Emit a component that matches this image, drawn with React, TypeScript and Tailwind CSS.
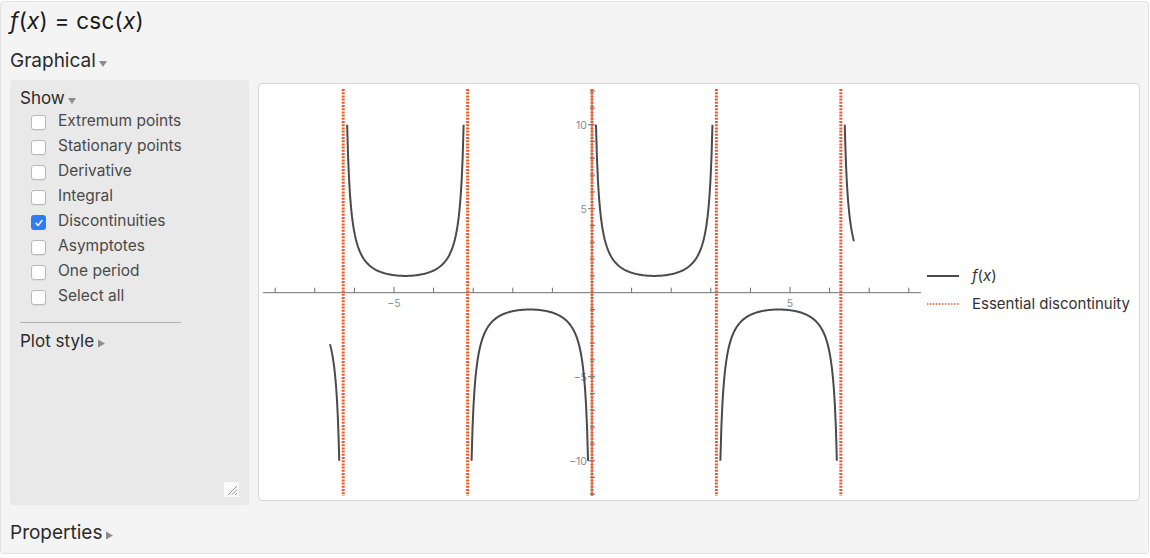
import React from "react";

const FONT = { fontFamily: "Inter, 'Liberation Sans', sans-serif" };

const X0 = 333;
const SX = 39.6;
const Y0 = 209.7;
const SY = 16.8;
const px = (x: number) => X0 + SX * x;
const py = (y: number) => Y0 - SY * y;

const LIMIT = 6.616;

function cscPaths() {
  const eps = Math.asin(0.1);
  const out: string[] = [];
  for (let k = -3; k <= 2; k++) {
    let a = k * Math.PI + eps;
    let b = (k + 1) * Math.PI - eps;
    a = Math.max(a, -LIMIT);
    b = Math.min(b, LIMIT);
    if (a >= b) continue;
    const n = 120;
    const pts: string[] = [];
    for (let i = 0; i <= n; i++) {
      const x = a + ((b - a) * i) / n;
      const y = 1 / Math.sin(x);
      pts.push(`${px(x).toFixed(2)},${py(y).toFixed(2)}`);
    }
    out.push("M" + pts.join("L"));
  }
  return out;
}

const Caret = ({ dir }: { dir: "down" | "right" }) => (
  <svg
    width="10"
    height="10"
    viewBox="0 0 10 10"
    className="ml-[2px] mt-[4px] inline-block"
  >
    {dir === "down" ? (
      <path d="M1 3h8l-4 6z" fill="#8c8c8c" />
    ) : (
      <path d="M2 1.5v8l7-4z" fill="#8c8c8c" />
    )}
  </svg>
);

const options = [
  "Extremum points",
  "Stationary points",
  "Derivative",
  "Integral",
  "Discontinuities",
  "Asymptotes",
  "One period",
  "Select all",
];

const Checkbox = ({ checked }: { checked: boolean }) =>
  checked ? (
    <span className="flex h-[15px] w-[15px] shrink-0 items-center justify-center rounded-[3px] bg-[#2f7df6]">
      <svg width="10" height="10" viewBox="0 0 10 10">
        <path
          d="M2 5.3l2 2.2 4-5"
          fill="none"
          stroke="#fff"
          strokeWidth="1.5"
          strokeLinecap="round"
          strokeLinejoin="round"
        />
      </svg>
    </span>
  ) : (
    <span className="h-[15px] w-[15px] shrink-0 rounded-[3px] border border-[#b9b9b9] bg-white shadow-[0_1px_0_rgba(0,0,0,0.05)]" />
  );

const Sidebar = () => (
  <div className="relative h-[425px] w-[239px] rounded-[3px] bg-[#e9e9e9] pl-[10px] pt-[8px]">
    <div className="flex items-center text-[17px] leading-[20px] text-[#2b2b2b]">
      Show
      <Caret dir="down" />
    </div>
    <div className="mt-[2px] flex flex-col">
      {options.map((o) => (
        <div key={o} className="flex h-[25px] items-center pl-[11px]">
          <Checkbox checked={o === "Discontinuities"} />
          <span className="ml-[12px] -mt-[4px] text-[15.5px] text-[#4a4a4a]">
            {o}
          </span>
        </div>
      ))}
    </div>
    <div className="mt-[12px] h-px w-[161px] bg-[#b3b3b3]" />
    <div className="mt-[8px] flex items-center text-[17px] leading-[20px] text-[#2b2b2b]">
      Plot style
      <Caret dir="right" />
    </div>
    <div className="absolute bottom-[8px] right-[10px] h-[15px] w-[15px] bg-[#fbfbfb]">
      <svg width="15" height="15" viewBox="0 0 15 15">
        <path
          d="M4 13L13 4M7.5 13L13 7.5M11 13L13 11"
          stroke="#8a8a8a"
          strokeWidth="0.9"
        />
      </svg>
    </div>
  </div>
);

const Chart = () => {
  const disc = [-2 * Math.PI, -Math.PI, 0, Math.PI, 2 * Math.PI];
  const xTicks = Array.from({ length: 17 }, (_, i) => i - 8);
  const yTicks = Array.from({ length: 25 }, (_, i) => i - 12);
  return (
    <svg width="668" height="418" className="shrink-0">
      <line x1="4" y1={Y0} x2="662" y2={Y0} stroke="#6f6f6f" strokeWidth="1" />
      {xTicks.map((t) =>
        t === 0 ? null : (
          <line
            key={"x" + t}
            x1={px(t)}
            x2={px(t)}
            y1={Y0}
            y2={Y0 - (t % 5 === 0 ? 6 : 5)}
            stroke="#6f6f6f"
            strokeWidth="1"
          />
        )
      )}
      <line x1={X0} y1="6" x2={X0} y2="413" stroke="#6f6f6f" strokeWidth="1" />
      {yTicks.map((t) =>
        t === 0 ? null : (
          <line
            key={"y" + t}
            x1={X0 - (t % 5 === 0 ? 4 : 2)}
            x2={X0 + 3}
            y1={py(t)}
            y2={py(t)}
            stroke="#6f6f6f"
            strokeWidth="1"
          />
        )
      )}
      <g fill="#8a8a8a" fontSize="10.5" style={FONT}>
        <text x={px(-5)} y="224" textAnchor="middle">
          −5
        </text>
        <text x={px(5)} y="224" textAnchor="middle">
          5
        </text>
        <text x={X0 - 5} y={py(10) + 4} textAnchor="end">
          10
        </text>
        <text x={X0 - 5} y={py(5) + 4} textAnchor="end">
          5
        </text>
        <text x={X0 - 5} y={py(-5) + 4} textAnchor="end">
          −5
        </text>
        <text x={X0 - 5} y={py(-10) + 4} textAnchor="end">
          −10
        </text>
      </g>
      {cscPaths().map((d, i) => (
        <path
          key={i}
          d={d}
          fill="none"
          stroke="#4a4a4a"
          strokeWidth="2"
          strokeLinejoin="round"
        />
      ))}
      {disc.map((x) => (
        <line
          key={x}
          x1={px(x)}
          x2={px(x)}
          y1="6"
          y2="413"
          stroke="#f05a26"
          strokeWidth="3"
          strokeDasharray="2 1.2"
        />
      ))}
    </svg>
  );
};

const Legend = () => (
  <div className="-mt-[4px] flex flex-col gap-[10px] text-[15px] text-[#333]">
    <div className="flex h-[18px] items-center">
      <span className="h-[2px] w-[32px] bg-[#4a4a4a]" />
      <span className="ml-[13px] italic">
        f<span className="not-italic">(</span>x<span className="not-italic">)</span>
      </span>
    </div>
    <div className="flex h-[18px] items-center">
      <svg width="32" height="4" className="shrink-0">
        <line
          x1="0"
          x2="32"
          y1="2"
          y2="2"
          stroke="#f05a26"
          strokeWidth="1.5"
          strokeDasharray="1.5 1.5"
        />
      </svg>
      <span className="ml-[13px]">Essential discontinuity</span>
    </div>
  </div>
);

export default function App() {
  return (
    <div className="h-[558px] w-[1150px] bg-white pt-[1px]" style={FONT}>
      <div className="h-[553px] w-[1149px] rounded-[4px] border border-[#e2e2e2] bg-[#f4f4f4] pl-[9px] pt-[7px] text-[#1a1a1a]">
        <div className="text-[22.5px] leading-[24px] tracking-[0.01em]">
          <i>f</i>(<i>x</i>) = csc(<i>x</i>)
        </div>
        <div className="mt-[17px] flex items-center text-[19px] leading-[22px] text-[#2b2b2b]">
          Graphical
          <Caret dir="down" />
        </div>
        <div className="mt-[8px] flex items-start">
          <Sidebar />
          <div className="ml-[9px] mt-[3px] flex h-[418px] w-[882px] items-center rounded-[4px] border border-[#d6d6d6] bg-white">
            <Chart />
            <Legend />
          </div>
        </div>
        <div className="mt-[17px] flex items-center text-[19px] leading-[22px] text-[#2b2b2b]">
          Properties
          <Caret dir="right" />
        </div>
      </div>
    </div>
  );
}
